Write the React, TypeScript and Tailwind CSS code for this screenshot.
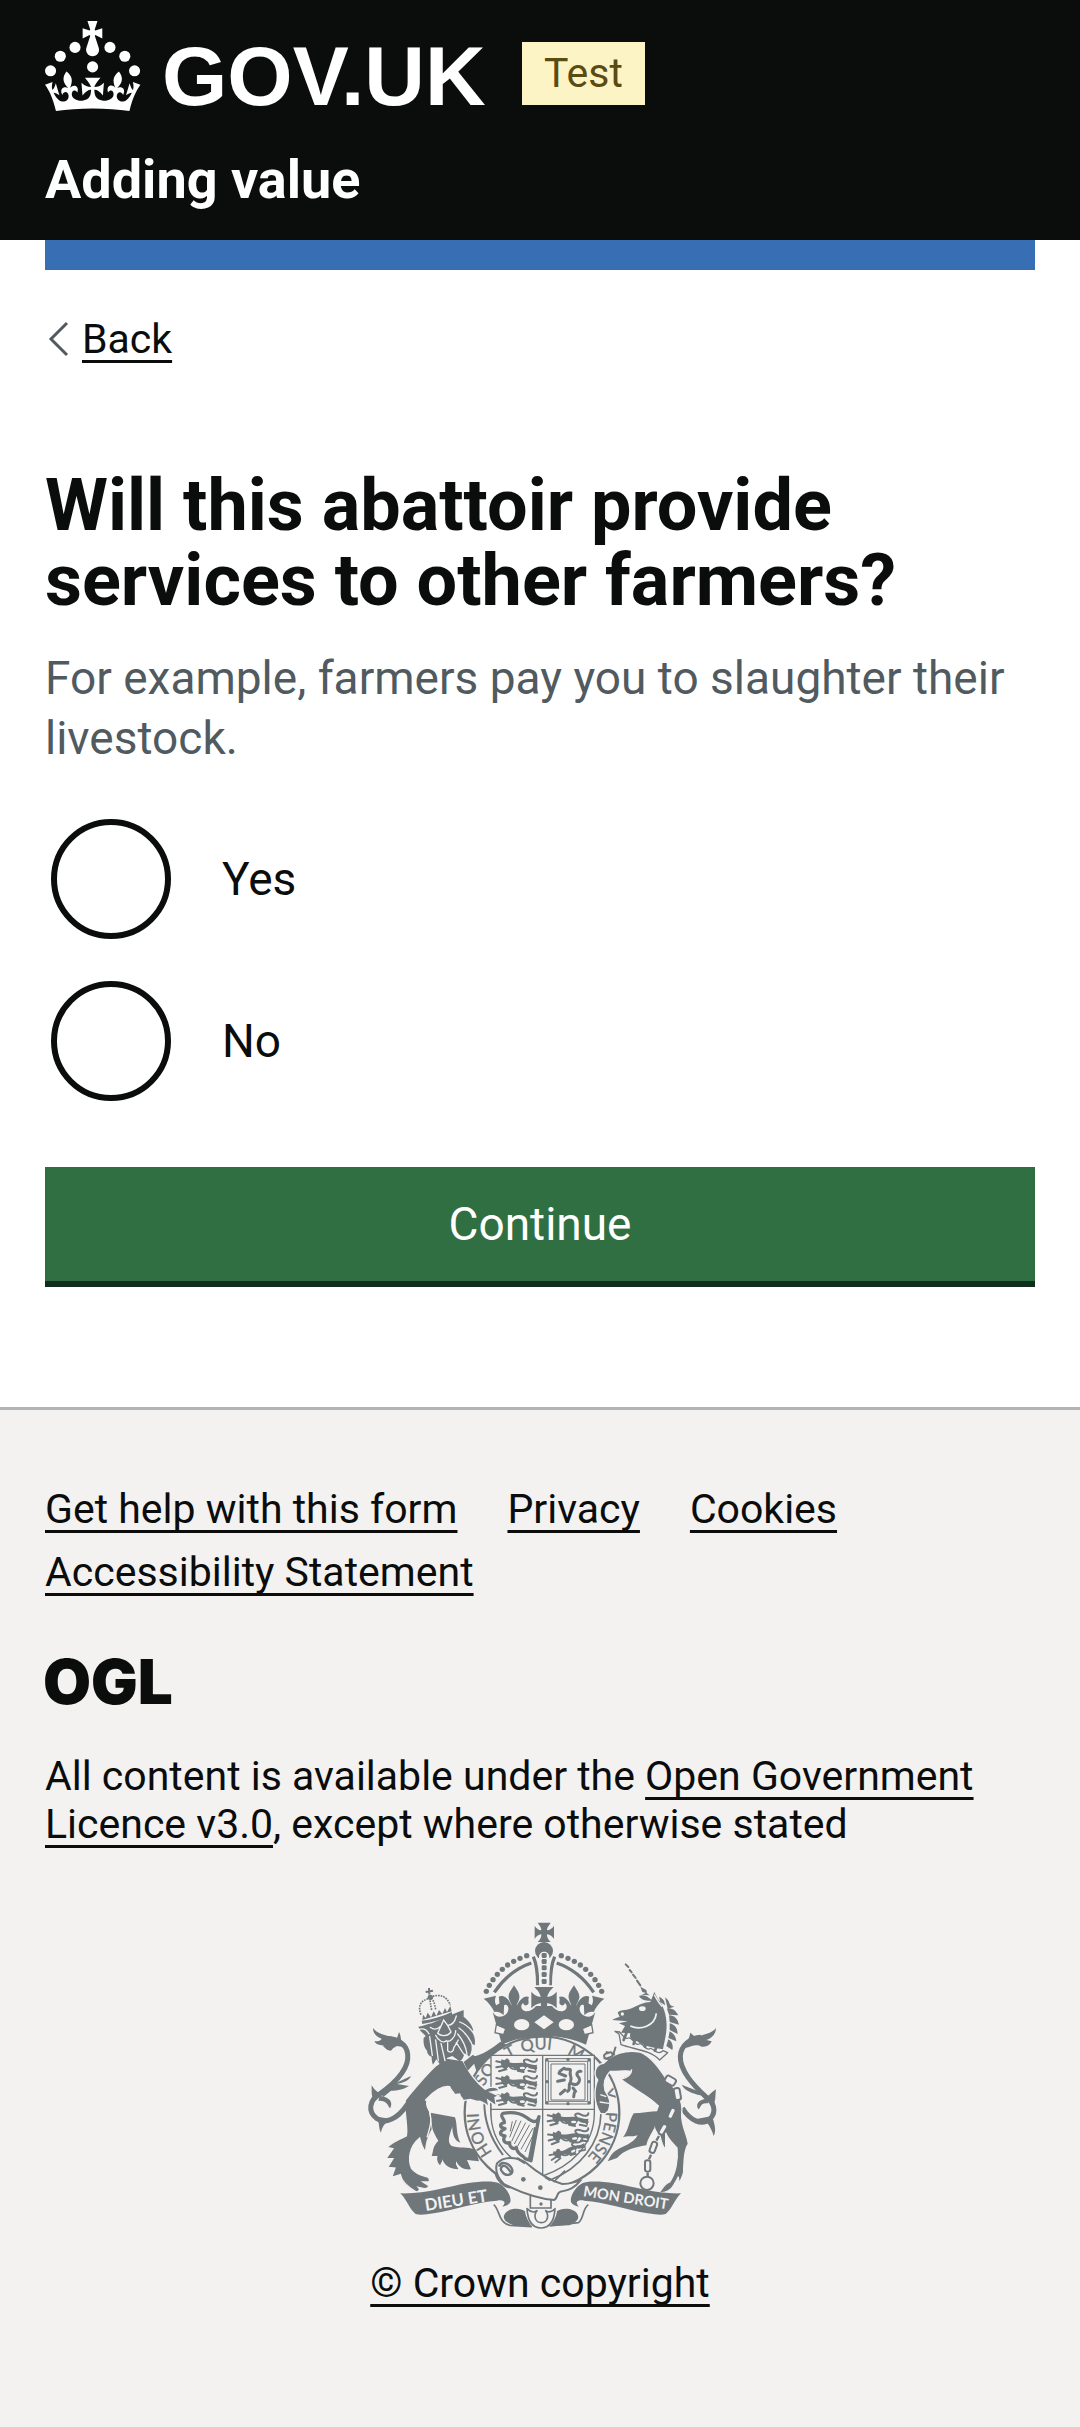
import type { ReactNode } from 'react';

const linkClass =
  'underline decoration-[3px] underline-offset-[7px] [text-decoration-skip-ink:none] text-[#0b0c0c] hover:decoration-[6px]';

function GovUkLogo() {
  return (
    <svg
      viewBox="0 0 324 60"
      fill="currentColor"
      role="img"
      aria-label="GOV.UK"
      className="h-[90px] w-[486px] shrink-0 overflow-visible"
    >
      <circle cx="20" cy="17.6" r="3.7" />
      <circle cx="10.2" cy="23.5" r="3.7" />
      <circle cx="3.7" cy="33.2" r="3.7" />
      <circle cx="31.7" cy="30.6" r="3.7" />
      <circle cx="43.3" cy="17.6" r="3.7" />
      <circle cx="53.2" cy="23.5" r="3.7" />
      <circle cx="59.7" cy="33.2" r="3.7" />
      <path d="M33.1,9.8c.2-.1.3-.3.5-.5l4.6,2.4v-6.8l-4.6,1.5c-.1-.2-.3-.3-.5-.5l1.9-5.9h-6.7l1.9,5.9c-.2.1-.3.3-.5.5l-4.6-1.5v6.8l4.6-2.4c.1.2.3.3.5.5l-2.6,8c-.9,2.8,1.2,5.7,4.1,5.7h0c3,0,5.1-2.9,4.1-5.7l-2.6-8ZM37,37.9s-3.4,3.8-4.1,6.1c2.2,0,4.2-.5,6.4-2.8l-.7,8.5c-2-2.8-4.4-4.1-5.7-3.8.1,3.1.5,6.7,5.8,7.2,3.7.3,6.7-1.5,7-3.8.4-2.6-2-4.3-3.7-1.6-1.4-4.5,2.4-6.1,4.9-3.2-1.9-4.5-1.8-7.7,2.4-10.9,3,4,2.6,7.3-1.2,11.1,2.4-1.3,6.2,0,4,4.6-1.2-2.8-3.7-2.2-4.2.2-.3,1.7.7,3.7,3,4.2,1.9.3,4.7-.9,7-5.9-1.3,0-2.4.7-3.9,1.7l2.4-8c.6,2.3,1.4,3.7,2.2,4.5.6-1.6.5-2.8,0-5.3l5,1.8c-2.6,3.6-5.2,8.7-7.3,17.5-7.4-1.1-15.7-1.7-24.5-1.7h0c-8.8,0-17.1.6-24.5,1.7-2.1-8.9-4.7-14-7.3-17.5l5-1.8c-.5,2.5-.6,3.7,0,5.3.8-.8,1.6-2.3,2.2-4.5l2.4,8c-1.5-1-2.6-1.7-3.9-1.7,2.3,5,5.2,6.2,7,5.9,2.3-.4,3.3-2.4,3-4.2-.5-2.4-3-3.1-4.2-.2-2.2-4.6,1.6-6,4-4.6-3.7-3.7-4.2-7.1-1.2-11.1,4.2,3.2,4.3,6.4,2.4,10.9,2.5-2.8,6.3-1.3,4.9,3.2-1.8-2.7-4.1-1-3.7,1.6.3,2.3,3.3,4.1,7,3.8,5.4-.5,5.7-4.2,5.8-7.2-1.3-.2-3.7,1-5.7,3.8l-.7-8.5c2.2,2.3,4.2,2.7,6.4,2.8-.7-2.3-4.1-6.1-4.1-6.1h10.6,0Z" />
      <text x="78" y="56" className="font-['Liberation_Sans',sans-serif] text-[56px] font-bold">
        GOV.UK
      </text>
    </svg>
  );
}

const G = '#6f777b';
const B = '#f3f2f1';

const archPearls = [
  [408, 274], [417, 256], [428, 239], [441, 223], [456, 208], [472, 195], [490, 184], [509, 175], [529, 167],
];

/* One half of the large crown; the other half mirrors it about x = 581. */
function CrownHalf() {
  return (
    <g>
      {archPearls.map(([x, y]) => (
        <circle key={x} cx={x} cy={y} r="8" />
      ))}
      <path d="M432 277C458 238 496 205 543 189" fill="none" stroke={G} strokeWidth="10" />
      <path d="M549 170C560 195 562 225 562 256" fill="none" stroke={G} strokeWidth="10" />
      <path d="M400 296L437 287C432 301 434 308 438 316L462 301L460 345C448 335 440 334 432 336C426 322 414 306 400 296Z" />
      <path d="M491 256C500 270 509 280 507 294C506 304 499 311 499 318C507 300 522 284 536 291C531 300 538 308 533 313C528 319 519 316 519 309C509 315 512 330 523 333C535 336 548 330 557 318L581 318L581 408C536 408 490 418 455 434L427 336C436 352 448 352 457 349C472 343 478 330 472 318C464 308 462 320 452 315C444 308 448 299 445 290C460 282 477 297 484 318C484 310 477 304 475 294C473 280 483 270 491 256Z" />
      <ellipse cx="514" cy="374" rx="23" ry="17" fill={B} />
      <path d="M438 374L466 386L460 404L434 398Z" fill={B} stroke={G} strokeWidth="4" />
    </g>
  );
}

/* A lion passant as it appears in the English quarters, 130 × 42. */
function Passant({ x, y, r = 0 }: { x: number; y: number; r?: number }) {
  return (
    <g transform={`translate(${x} ${y}) rotate(${r})`}>
      <path d="M18 4L26 7L34 1L41 6C44 18 38 32 28 34C18 30 12 14 18 4Z" />
      <path
        d="M2 10L16 13M2 28L20 25M10 40L32 34M40 24C48 34 54 36 66 32M66 38L84 42M94 22C102 30 108 30 122 30M118 42L98 38M90 18C76 4 92 2 102 8C112 14 124 12 124 4"
        fill="none"
        stroke={G}
        strokeWidth="6"
        strokeLinecap="round"
      />
      <path d="M38 12C56 20 72 10 92 16C104 18 114 24 124 20L122 42C114 28 104 28 96 26C86 30 92 40 78 40C66 40 58 26 38 26Z" />
      <ellipse cx="80" cy="30" rx="8" ry="4" fill={B} />
    </g>
  );
}

function ChainLink({ x, y, r, w = 16, h = 34 }: { x: number; y: number; r: number; w?: number; h?: number }) {
  return (
    <rect
      x={-w / 2}
      y={-h / 2}
      width={w}
      height={h}
      rx="7"
      fill={B}
      stroke={G}
      strokeWidth="6"
      transform={`translate(${x} ${y}) rotate(${r})`}
    />
  );
}

function RoyalArms() {
  return (
    <svg viewBox="8 66 1125 921" className="h-[307px] w-[375px]" fill={G} role="img" aria-label="Royal coat of arms">
      <defs>
        <path id="motto-ring" d="M575 828A190 190 0 0 1 575 448A190 190 0 0 1 575 828" />
      </defs>

      {/* Garter */}
      <path d="M365 470C395 466 425 445 450 425L480 440L380 520Z" />
      <ellipse cx="575" cy="638" rx="232" ry="228" fill={B} stroke={G} strokeWidth="7" />
      <g fontFamily="Lato, sans-serif" fontSize="49" fontWeight="400" stroke={G} strokeWidth="1">
        <text><textPath href="#motto-ring" startOffset="170">HONI</textPath></text>
        <text><textPath href="#motto-ring" startOffset="378">SO</textPath></text>
        <text><textPath href="#motto-ring" startOffset="490">T</textPath></text>
        <text><textPath href="#motto-ring" startOffset="536">QUI</textPath></text>
        <text><textPath href="#motto-ring" startOffset="672">M</textPath></text>
        <text><textPath href="#motto-ring" startOffset="828">Y</textPath></text>
        <text><textPath href="#motto-ring" startOffset="892">PENSE</textPath></text>
      </g>
      <path d="M402 600C400 665 420 715 458 765M422 610C422 670 432 710 468 755" fill="none" stroke={G} strokeWidth="6" />
      <path d="M752 640C750 730 690 805 600 840" fill="none" stroke={G} strokeWidth="5" />

      {/* Great crown */}
      <CrownHalf />
      <g transform="matrix(-1 0 0 1 1162 0)">
        <CrownHalf />
      </g>
      <path d="M562 68H601C595 77 589 84 590 91C599 90 607 84 611 77V117C607 110 599 104 590 103C589 111 594 120 601 126H562C569 120 574 111 573 103C564 104 557 110 553 117V77C557 84 564 90 573 91C574 84 568 77 562 68Z" />
      <circle cx="581" cy="153" r="27" />
      <path d="M566 254V172C566 150 597 150 597 172V254Z" fill={B} />
      {[166, 184, 203, 223, 244].map((y) => (
        <rect key={y} x="574" y={y - 7} width="15" height="15" rx="4" />
      ))}
      <path d="M552 261H610C602 269 592 280 591 291C601 290 612 284 619 275V325C610 316 600 309 590 310C589 322 594 332 602 340H560C568 332 573 322 572 310C562 309 552 316 543 325V275C550 284 561 290 571 291C570 280 560 269 552 261Z" />
      <path d="M552 367L581 346L610 367L581 388Z" fill={B} />

      {/* Shield */}
      <path d="M422 466H732V640C732 735 660 800 577 828C495 800 422 735 422 640Z" fill={B} stroke={G} strokeWidth="4" />
      <path d="M577 466V828M422 628H732" stroke={G} strokeWidth="4" />
      <Passant x={436} y={474} />
      <Passant x={436} y={524} />
      <Passant x={436} y={575} />
      <Passant x={590} y={636} />
      <Passant x={590} y={694} r={-6} />
      <g transform="translate(592 758) rotate(-24) scale(.9)">
        <Passant x={0} y={0} />
      </g>
      <path d="M586 476H720V612H586ZM594 484H712V604H594ZM602 492H704V600H602Z" fill="none" stroke={G} strokeWidth="3" />
      {[[590, 480], [716, 480], [590, 608], [716, 608], [653, 478], [653, 611], [590, 545], [716, 545]].map(([x, y]) => (
        <circle key={`${x}-${y}`} cx={x} cy={y} r="5" />
      ))}
      <path
        d="M640 505C650 512 664 502 660 514C656 528 668 532 660 546C650 560 664 566 652 574M626 520L646 528M622 544L642 540M630 582L644 570M672 578L670 590M662 550C684 562 694 540 682 528C676 520 684 512 692 514M668 564L676 574M636 508L628 514"
        fill="none"
        stroke={G}
        strokeWidth="9"
        strokeLinecap="round"
        strokeLinejoin="round"
      />
      <path
        d="M458 640C446 650 464 656 462 668C446 672 448 682 464 686C446 694 446 706 464 708C454 722 466 732 478 728C476 742 490 750 498 742C500 764 520 766 524 776L542 782L566 650C560 672 545 666 528 652C508 638 480 636 458 640Z"
        fill={B}
        stroke={G}
        strokeWidth="10"
        strokeLinejoin="round"
      />
      <path d="M556 682L538 776" stroke={G} strokeWidth="10" />
      <path
        d="M486 664L480 694M498 660L478 712M512 662L484 724M526 668L492 732M538 674L502 738M548 684L512 748M549 704L524 756"
        stroke={G}
        strokeWidth="3"
      />

      {/* Lion: body and limbs */}
      <path
        d="M258 496C230 522 196 562 165 600C160 640 174 680 168 708C150 716 128 724 110 742L128 746L107 776L128 776L112 802L134 804L124 832L150 824C154 846 170 860 198 876C208 874 210 868 204 862L222 866C232 866 236 862 234 856L218 846L236 846C240 838 236 832 228 830C214 826 196 822 184 806C172 780 176 740 208 714C212 730 214 742 226 756C226 736 232 712 246 688C244 664 240 650 238 634C228 622 236 606 226 600C250 572 278 556 298 560C300 572 312 574 312 584L328 582C330 594 340 596 338 602L360 598L380 604C392 602 404 610 416 620L412 600L438 618L434 592L446 588L420 576L446 572C444 560 424 558 404 568C380 548 356 520 338 482L290 474Z"
        stroke={B}
        strokeWidth="4"
      />
      <path d="M240 638L314 652C322 676 316 700 330 728C312 722 306 702 306 680C296 708 290 726 304 738C330 746 350 738 376 750L386 784L350 780L362 808C346 810 328 806 318 784C314 796 322 800 324 808C300 806 284 800 276 778C276 788 270 790 270 796C262 790 258 776 262 768L244 768C250 752 246 740 264 722C254 706 248 694 246 684Z" />
      <path d="M230 606C224 622 242 628 240 646C246 668 236 690 230 712" fill="none" stroke={B} strokeWidth="4" />
      <path d="M340 486L352 512L384 478L368 464Z" />

      {/* Lion: tail */}
      <path
        d="M172 612C140 660 104 672 80 656C50 634 58 600 88 582C130 552 178 510 172 462C168 430 138 414 104 416"
        fill="none"
        stroke={G}
        strokeWidth="15"
      />
      <path d="M68 384C80 402 110 408 140 414L146 396C154 410 150 424 158 440C140 440 120 430 104 438C90 434 78 436 72 424C88 424 92 420 94 416C78 410 68 400 68 384ZM122 452C110 452 104 444 98 438L140 424L154 436C140 436 130 442 122 452ZM64 556C72 570 78 572 86 580L74 604C62 592 64 574 64 556ZM88 580L112 560L182 528C176 544 156 548 140 552L176 558C156 570 140 572 122 572L100 590ZM88 588C112 590 130 602 120 624C112 622 116 602 84 602ZM80 650L128 658C108 664 96 676 92 698C84 684 88 668 80 650Z" />

      {/* Lion: head, mane and crown */}
      <path d="M204 380C220 378 230 372 244 370L318 338L340 330L340 350C352 360 366 374 369 392L362 392C372 404 376 420 373 436L362 430C366 444 364 458 356 470C350 462 346 462 342 460C340 472 336 480 328 484L306 468L290 474L288 502L268 492L258 478L248 494C244 484 244 476 244 470C236 468 230 460 230 452C222 444 218 430 220 414L226 408L210 392Z" />
      <path
        d="M206 388C220 384 230 390 236 402M240 382C250 390 262 388 272 378L280 360L292 376C304 376 314 364 318 348M272 378L262 400C272 410 292 410 302 396L292 376M256 406C264 424 280 430 288 422C296 428 316 414 316 392M238 410L246 466M256 420L264 482M272 430L284 482M292 428V452C298 460 310 456 310 444L324 420M322 402C336 418 346 438 350 462M318 428L340 462M326 384C344 396 354 410 364 430M328 366C344 372 356 382 364 392"
        fill="none"
        stroke={B}
        strokeWidth="4"
        strokeLinecap="round"
      />
      <path d="M214 362C242 360 276 350 304 336L306 344C278 358 246 366 216 372ZM218 344L226 354L232 338L242 352L250 334L258 348L266 330L276 342L284 324L290 336L300 318L304 334L216 360Z" />
      <path
        d="M212 344C202 320 210 302 234 296M244 330C240 312 240 304 238 294M256 328C252 308 250 300 240 292C270 278 292 292 300 316"
        fill="none"
        stroke={G}
        strokeWidth="5"
        strokeDasharray="5 3"
      />
      <circle cx="240" cy="292" r="8" />
      <path d="M237 284L236 264M226 276L248 272" stroke={G} strokeWidth="6" />

      {/* Unicorn: tail */}
      <path
        d="M996 624C1020 664 1056 678 1080 656C1100 634 1090 606 1066 590C1030 556 988 512 990 468C992 436 1020 414 1052 412"
        fill="none"
        stroke={G}
        strokeWidth="15"
      />
      <path d="M1097 384C1086 400 1058 404 1036 412L1020 398C1016 420 1008 430 1004 444C1024 440 1036 430 1054 440C1070 442 1080 434 1084 424L1068 420C1086 414 1096 402 1097 384ZM1097 568C1082 578 1078 584 1070 592L1086 620C1098 604 1094 586 1097 568ZM1064 584L1040 572L994 554C1004 574 1028 580 1050 586ZM1070 596C1046 598 1034 612 1044 628C1052 624 1048 606 1074 610ZM1022 660L1070 668C1080 680 1086 694 1090 708C1100 688 1090 668 1086 648Z" />

      {/* Unicorn: body */}
      <path
        d="M750 640C730 608 730 570 742 540C726 520 736 492 760 490C786 462 826 448 868 456C904 470 930 510 950 540C976 566 1000 600 994 640C992 678 1010 700 1014 732C1000 752 1002 780 1000 806C1002 820 994 836 986 850L984 830C978 844 974 848 970 856C964 870 944 880 926 878C936 866 942 852 958 846C976 820 984 780 980 744C966 728 952 716 946 698L946 748C934 738 932 720 928 704C910 694 906 668 916 640L924 618C896 588 846 566 812 538C820 528 834 530 842 514C820 510 800 516 780 514C764 530 758 550 764 572C776 590 784 606 774 632L764 642Z"
        stroke={B}
        strokeWidth="4"
      />
      <path d="M850 640C872 640 900 634 924 634L912 684C900 706 892 718 888 736C852 742 822 750 800 774L772 784C780 768 784 760 796 752C816 740 850 730 862 706C844 712 830 706 818 712C834 694 836 662 850 640Z" />
      <path d="M812 538C836 532 844 520 844 508" fill="none" stroke={B} strokeWidth="4" />
      <path d="M750 584L768 590M748 606L776 610" stroke={B} strokeWidth="4" />

      {/* Unicorn: head, mane and horn */}
      <path d="M802 338C808 328 826 332 840 326C864 316 882 306 900 306L912 276L922 296C940 316 952 350 948 392C946 416 940 432 938 448C916 444 880 440 860 424C844 424 836 414 840 400L812 398L824 378L806 370L832 364L786 360C792 354 800 354 808 350Z" />
      <path d="M840 378C870 392 914 378 918 340" fill="none" stroke={B} strokeWidth="5" />
      <ellipse cx="876" cy="326" rx="10" ry="7" fill={B} />
      <circle cx="816" cy="342" r="5" fill={B} />
      <path d="M912 284C920 300 928 312 936 320" fill="none" stroke={B} strokeWidth="4" />
      <path d="M926 290C940 296 944 306 944 316L930 306ZM944 292C964 306 950 316 972 320L952 326ZM950 326C968 324 976 332 984 346L956 344ZM956 346C974 346 982 358 986 374L958 366ZM958 370C974 374 982 386 982 402L958 390ZM958 394C970 400 978 412 978 424L954 414ZM954 418C964 422 970 436 966 450L948 438ZM866 288C880 280 896 292 906 302C890 304 872 300 866 288ZM874 284L898 286L888 278Z" />
      <path d="M826 193L834 201M838 210L844 217M848 224L856 234M860 242L870 256" stroke={G} strokeWidth="6" strokeLinecap="round" />
      <path d="M870 260L888 270L890 280L876 276Z" />

      {/* Unicorn: coronet collar and chain */}
      <path
        d="M794 394L806 402L812 434C850 448 900 450 928 480L952 458L938 452C920 470 906 440 898 446C886 456 878 424 866 432C852 440 846 408 834 414C822 420 816 404 808 396Z"
        fill={B}
        stroke={G}
        strokeWidth="4"
        strokeLinejoin="round"
      />
      <path d="M820 420L828 400M850 432L856 414M884 440L890 424M914 452L920 436" stroke={G} strokeWidth="8" strokeLinecap="round" />
      <path d="M796 440L790 460M766 456L794 464M760 474L786 480" stroke={G} strokeWidth="6" />
      <ChainLink x={774} y={466} r={70} w={14} h={26} />
      <ChainLink x={960} y={542} r={-60} w={22} h={32} />
      <ChainLink x={981} y={582} r={-10} w={18} h={36} />
      <ChainLink x={964} y={640} r={25} />
      <ChainLink x={938} y={688} r={30} />
      <ChainLink x={909} y={742} r={20} />
      <ChainLink x={892} y={798} r={0} />
      <path d="M976 606L970 620M956 660L948 670M926 708L918 722M902 764L896 778M892 818V830" stroke={G} strokeWidth="7" />
      <circle cx="890" cy="850" r="20" fill="none" stroke={G} strokeWidth="6" />

      {/* Lower folds of the ribbon */}
      <path d="M430 914C448 926 444 972 480 976L545 980M714 914C696 926 700 960 684 968L598 978" fill="none" stroke={G} strokeWidth="5" />
      <path d="M462 944C470 924 510 922 524 934C526 952 536 966 544 980L490 976C466 968 456 956 462 944ZM682 944C674 924 634 922 620 934C618 952 608 966 600 978L656 976C678 968 688 956 682 944Z" />

      {/* Motto ribbon */}
      <path id="ribbon" d="M150 880C230 882 290 860 350 850C390 844 430 842 446 850C468 862 484 890 480 906C476 914 468 918 456 920C472 904 456 898 440 902C380 906 310 930 250 940C226 944 208 946 196 942C176 926 170 900 150 880Z" />
      <use href="#ribbon" transform="matrix(-1 0 0 1 1142 0)" />
      <g fill={B} fontFamily="Lato, sans-serif" fontWeight="700">
        <text x="226" y="933" fontSize="50" transform="rotate(-9 226 933)">DIEU ET</text>
        <text x="697" y="888" fontSize="44" transform="rotate(9 697 888)">MON DROIT</text>
      </g>

      {/* Belt and buckle */}
      <path d="M540 880V924H602V890" fill={B} stroke={G} strokeWidth="5" />
      <path
        d="M440 790C462 766 500 772 524 786C552 810 590 840 636 852C660 852 670 846 690 842C672 866 652 870 636 874C616 876 626 890 612 900C560 896 500 872 460 852C440 830 434 808 440 790Z"
        fill={B}
        stroke={G}
        strokeWidth="6"
      />
      <path d="M446 800C452 780 480 790 486 810C488 826 466 830 456 816C446 806 456 790 470 802L484 820M436 820C440 840 460 860 480 862M500 774L524 790" fill="none" stroke={G} strokeWidth="7" />
      <path d="M610 846L644 812M584 832L600 842" stroke={G} strokeWidth="5" />
      <circle cx="519" cy="838" r="7" />
      <circle cx="570" cy="863" r="7" />
      <circle cx="572" cy="912" r="5" />
      <path
        d="M530 926C540 936 552 938 560 932C550 944 552 968 573 968C594 968 596 944 586 932C594 938 606 936 614 926C612 958 600 984 572 984C544 984 532 958 530 926Z"
        fill={B}
        stroke={G}
        strokeWidth="5"
        strokeLinejoin="round"
      />
    </svg>
  );
}

function FooterLink({ children }: { children: ReactNode }) {
  return (
    <li>
      <a href="#" className={linkClass}>
        {children}
      </a>
    </li>
  );
}

function RadioOption({ id, label }: { id: string; label: string }) {
  return (
    <div className="flex items-center pl-[6px]">
      <input
        type="radio"
        id={id}
        name="other-farmers"
        value={label}
        className="size-[120px] shrink-0 appearance-none rounded-full border-[6px] border-[#0b0c0c] bg-white checked:bg-[#0b0c0c] checked:bg-clip-content checked:p-[24px]"
      />
      <label htmlFor={id} className="pl-[51px] text-[46px] leading-[60px]">
        {label}
      </label>
    </div>
  );
}

export default function App() {
  return (
    <div className="min-h-screen bg-white font-['Roboto',sans-serif] text-[#0b0c0c]">
      <header className="bg-[#0b0c0c] px-[45px] pt-[21px] pb-[30px] text-white">
        <div className="flex items-start">
          <a href="#" className="w-[477px]">
            <GovUkLogo />
          </a>
          <strong className="mt-[21px] bg-[#fdf4c5] px-[22px] text-[41px] leading-[63px] font-normal text-[#594b12]">
            Test
          </strong>
        </div>
        <a href="#" className="mt-[39px] block text-[54px] leading-[60px] font-bold">
          Adding value
        </a>
      </header>

      <div className="px-[45px]">
        <div className="h-[30px] bg-[#386eb4]" />

        <a href="#" className="mt-[45px] flex w-fit items-center text-[41px] leading-[48px]">
          <svg viewBox="0 0 37 48" width="37" height="48" fill="none" stroke="#505a5f" strokeWidth="3" aria-hidden="true">
            <path d="M22 8L6 24L22 40" />
          </svg>
          <span className={linkClass}>Back</span>
        </a>

        <main className="pt-[105px]">
          <form onSubmit={(e) => e.preventDefault()}>
            <fieldset aria-describedby="farmers-hint">
              <legend>
                <h1 className="text-[72px] leading-[75px] font-bold">
                  Will this abattoir provide services to other farmers?
                </h1>
              </legend>
              <p id="farmers-hint" className="mt-[30px] text-[46px] leading-[60px] text-[#505a5f]">
                For example, farmers pay you to slaughter their livestock.
              </p>
              <div className="mt-[51px] flex flex-col gap-[42px]">
                <RadioOption id="other-farmers-yes" label="Yes" />
                <RadioOption id="other-farmers-no" label="No" />
              </div>
            </fieldset>
            <button
              type="submit"
              className="mt-[66px] w-full border-b-[6px] border-[#112e1d] bg-[#2f6f42] py-[27px] text-[46px] leading-[60px] text-white"
            >
              Continue
            </button>
          </form>
        </main>
      </div>

      <footer className="mt-[120px] border-t-[3px] border-[#b1b4b6] bg-[#f3f2f1] px-[45px] pt-[75px] pb-[120px] text-[41px] leading-[48px]">
        <ul className="flex flex-wrap gap-x-[50px] gap-y-[15px]">
          <FooterLink>Get help with this form</FooterLink>
          <FooterLink>Privacy</FooterLink>
          <FooterLink>Cookies</FooterLink>
          <FooterLink>Accessibility Statement</FooterLink>
        </ul>
        <svg
          viewBox="0 0 123 51"
          className="mt-[60px] block h-[51px] w-[123px] overflow-visible"
          role="img"
          aria-label="Open Government Licence"
        >
          <text x="-2" y="48" fill="#0b0c0c" className="font-['Inter',sans-serif] text-[62px] font-black">
            OGL
          </text>
        </svg>
        <p className="mt-[45px]">
          All content is available under the{' '}
          <a href="#" className={linkClass}>
            Open Government Licence v3.0
          </a>
          , except where otherwise stated
        </p>
        <div className="mt-[74px] flex justify-center">
          <a href="#" className="flex flex-col items-center gap-[30px]">
            <RoyalArms />
            <span className={linkClass}>© Crown copyright</span>
          </a>
        </div>
      </footer>
    </div>
  );
}
